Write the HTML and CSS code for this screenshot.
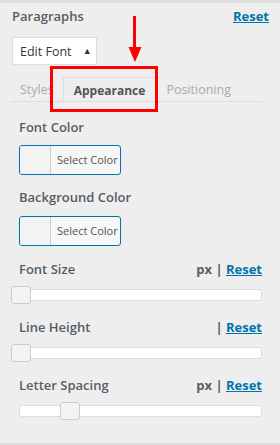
FILE: index.html
```html
<!DOCTYPE html>
<html lang="en">
<head>
    <meta charset="UTF-8">
    <title>Paragraphs</title>
    <link rel="stylesheet" href="styles.css">
</head>
<body>
    <div class="panel">
        <div class="panel-head">
            <span class="panel-title">Paragraphs</span>
            <a class="reset-link" href="#">Reset</a>
        </div>

        <button class="edit-font">Edit Font <span class="caret">&#9650;</span></button>

        <div class="tabs">
            <span class="tab tab-styles">Styles</span>
            <span class="tab tab-active">Appearance</span>
            <span class="tab">Positioning</span>
        </div>

        <div class="fields">
            <div class="field-label">Font Color</div>
            <div class="color-btn">
                <span class="swatch"></span>
                <span class="color-text">Select Color</span>
            </div>

            <div class="field-label field-gap">Background Color</div>
            <div class="color-btn">
                <span class="swatch"></span>
                <span class="color-text">Select Color</span>
            </div>

            <div class="slider-row">
                <span class="field-label">Font Size</span>
                <span class="unit">px | <a class="reset-link" href="#">Reset</a></span>
            </div>
            <div class="slider">
                <div class="track"></div>
                <div class="thumb thumb-start"></div>
            </div>

            <div class="slider-row">
                <span class="field-label">Line Height</span>
                <span class="unit">| <a class="reset-link" href="#">Reset</a></span>
            </div>
            <div class="slider">
                <div class="track"></div>
                <div class="thumb thumb-start"></div>
            </div>

            <div class="slider-row">
                <span class="field-label">Letter Spacing</span>
                <span class="unit">px | <a class="reset-link" href="#">Reset</a></span>
            </div>
            <div class="slider">
                <div class="track"></div>
                <div class="thumb thumb-spacing"></div>
            </div>
        </div>

        <!-- annotation drawn over the tabs -->
        <svg class="arrow" width="14" height="48" viewBox="0 0 14 48">
            <rect x="5" y="0" width="3" height="34" fill="#ff0000"/>
            <polygon points="0.5,31 13.5,31 7,46" fill="#ff0000"/>
        </svg>
        <div class="highlight"></div>
    </div>
</body>
</html>
```

FILE: styles.css
```css
body {
    margin: 0;
    background: #eeeeee;
    font-family: "Open Sans", "Liberation Sans", sans-serif;
    font-size: 13px;
    color: #555d66;
}

.panel {
    position: relative;
    height: 440px;
    border-top: 3px solid #dddddd;
    border-bottom: 2px solid #dddddd;
    padding: 0 11px 0 12px;
}

.panel-head {
    display: flex;
    justify-content: space-between;
    align-items: center;
    height: 26px;
}

.panel-title {
    font-weight: 600;
    font-size: 13px;
    color: #555d66;
}

.reset-link {
    color: #0073aa;
    font-weight: 700;
    text-decoration: underline;
}

.edit-font {
    display: block;
    margin-top: 8px;
    width: 85px;
    height: 28px;
    padding: 0 0 0 7px;
    background: #ffffff;
    border: 1px solid #dddddd;
    text-align: left;
    white-space: nowrap;
    font-family: "Open Sans", "Liberation Sans", sans-serif;
    font-size: 12.5px;
    color: #32373c;
}

.caret {
    font-size: 9px;
    margin-left: 8px;
    vertical-align: 2px;
}

.tabs {
    display: flex;
    margin-top: 12px;
    margin-left: -1px;
    margin-right: 7px;
    border-bottom: 1px solid #dddddd;
    height: 24px;
}

.tab {
    padding: 0 10px;
    line-height: 26px;
    font-size: 12.5px;
    color: #aaaaaa;
}

.tab-styles {
    padding: 0 9px;
}

.tab-active {
    height: 24px;
    line-height: 26px;
    border: 1px solid #dddddd;
    border-bottom: 1px solid #eeeeee;
    font-size: 12px;
    font-weight: 700;
    color: #555555;
}

.fields {
    padding: 15px 7px 0 7px;
}

.field-label {
    font-weight: 600;
    line-height: 20px;
    color: #555d66;
}

.field-gap {
    margin-top: 12px;
}

.color-btn {
    display: flex;
    margin-top: 8px;
    width: 100px;
    height: 28px;
    border: 1px solid #0073aa;
    border-radius: 3px;
    background: #f7f7f7;
    overflow: hidden;
}

.field-gap + .color-btn {
    margin-top: 9px;
}

.swatch {
    width: 30px;
    background: #f3f3f3;
    border-right: 1px solid #cccccc;
}

.color-text {
    padding-left: 6px;
    line-height: 28px;
    font-size: 11px;
    color: #555555;
}

.slider-row {
    display: flex;
    justify-content: space-between;
    align-items: center;
    height: 20px;
    margin-top: 13px;
}

.unit {
    font-weight: 700;
    color: #555d66;
}

.slider {
    position: relative;
    height: 18px;
    margin-top: 7px;
}

.track {
    position: absolute;
    left: 0;
    right: 0;
    top: 3px;
    height: 10px;
    background: #ffffff;
    border: 1px solid #dddddd;
    border-radius: 3px;
}

.thumb {
    position: absolute;
    top: 0;
    width: 18px;
    height: 16px;
    background: #f3f3f3;
    border: 1px solid #cccccc;
    border-radius: 3px;
}

.thumb-start {
    left: -8px;
}

.thumb-spacing {
    left: 41px;
}

.arrow {
    position: absolute;
    left: 128px;
    top: 13px;
}

.highlight {
    position: absolute;
    left: 50px;
    top: 63px;
    width: 102px;
    height: 40px;
    border: 3px solid #ff0000;
}
```
